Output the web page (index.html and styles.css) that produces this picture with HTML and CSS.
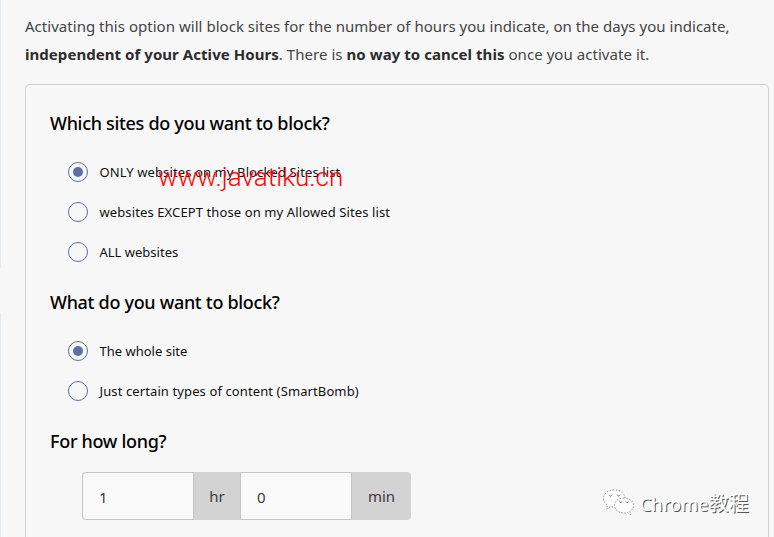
FILE: index.html
```
<!DOCTYPE html>
<html lang="en">
<head>
<meta charset="utf-8">
<title>Block sites</title>
<link rel="stylesheet" href="styles.css">
</head>
<body>
<div class="page">
  <div class="rail"><i class="rail-top"></i><i class="rail-bottom"></i></div>
  <main class="content">
    <p class="intro"><span class="line l1">Activating this option will block sites for the number of hours you indicate, on the days you indicate,</span>
    <span class="line l2"><b>independent of your Active Hours</b>. There is <b>no way to cancel this</b> once you activate it.</span></p>
    <section class="card">
      <h2>Which sites do you want to block?</h2>
      <div class="options">
        <label class="option"><i class="radio on"></i><span>ONLY websites on my Blocked Sites list</span></label>
        <label class="option"><i class="radio"></i><span>websites EXCEPT those on my Allowed Sites list</span></label>
        <label class="option"><i class="radio"></i><span class="plain">ALL websites</span></label>
      </div>
      <h2>What do you want to block?</h2>
      <div class="options">
        <label class="option"><i class="radio on"></i><span class="plain">The whole site</span></label>
        <label class="option"><i class="radio"></i><span>Just certain types of content (SmartBomb)</span></label>
      </div>
      <h2>For how long?</h2>
      <div class="duration">
        <span class="field first">1</span><span class="unit hr">hr</span><span class="field">0</span><span class="unit min">min</span>
      </div>
    </section>
  </main>
  <div class="url-mark">www.javatiku.cn</div>
  <div class="brand-mark">
    <svg width="32" height="28" viewBox="0 0 32 28">
      <g fill="#fff" stroke="#777" stroke-width=".8" stroke-dasharray="1.500 1.500">
        <path d="M12 2C6 2 1.500 5.500 1.500 10.500c0 3 1.500 5 4 6.500l-1 4 4-2.500c1.300.4 2.600.5 4 .5 6 0 10.500-3.500 10.500-8.500S18.500 2 12 2z"/>
        <path d="M22 10c-5.300 0-9.500 3.300-9.500 7.500S16.700 25 22 25c1.200 0 2.300-.2 3.300-.5l3.400 2-.9-3.200c2.300-1.400 3.700-3.300 3.700-5.800 0-4.200-4.200-7.500-9.500-7.500z"/>
      </g>
      <g fill="#fff" stroke="#666" stroke-width=".8"><path d="M7 6.500l1.500 2L10 6.500M15 6.500l1.500 2L18 6.500M17.500 13.500l1.200 1.500 1.200-1.500M24 13.500l1.200 1.500 1.200-1.500"/></g>
    </svg>
    <span class="brand-text">Chrome<span class="cjk">教程</span></span>
  </div>
</div>
</body>
</html>
```
FILE: styles.css
```
* { box-sizing: border-box; }
body { margin: 0; background: #f7f7f7; font-family: "Noto Sans", "Open Sans", sans-serif; color: #333; }
.page { position: relative; display: flex; width: 774px; height: 537px; overflow: hidden; }
.rail { width: 1px; display: flex; flex-direction: column; justify-content: space-between; }
.rail i { background: #e5eaf0; }
.rail-top { height: 268px; }
.rail-bottom { height: 224px; }
.content { flex: 1; padding: 12px 5px 0 24px; }
.intro { margin: 0; font-size: 15px; line-height: 28px; height: 72px; font-weight: 400; color: #444; }
.line { display: block; height: 28px; white-space: nowrap; }
.l1 { letter-spacing: .03px; }
.l2 { letter-spacing: .05px; }
.intro b { font-weight: 700; color: #2c2c2c; }
.card { height: 600px; border: 1px solid #d0d0d0; border-radius: 5px; padding: 23px 24px; }
h2 { margin: 0; font: 500 18px/30px "Noto Sans", sans-serif; letter-spacing: -.31px; color: #000; white-space: nowrap; }
.options { padding: 14px 0 15px 18px; }
.option { display: flex; align-items: center; gap: 11.500px; height: 40px; font-size: 13px; letter-spacing: .11px; color: #111; white-space: nowrap; }
.plain { letter-spacing: 0; }
.radio { width: 20px; height: 20px; border: 1px solid #5c70a3; border-radius: 50%; display: flex; align-items: center; justify-content: center; }
.radio.on::after { content: ""; width: 10px; height: 10px; border-radius: 50%; background: #5c70a3; }
.duration { display: flex; margin: 16px 0 0 32px; width: 329px; height: 48px; font-size: 15px; line-height: 48px; border-radius: 4px; overflow: hidden; background: #d3d3d3; color: #3c3c3c; }
.field { width: 112px; border: 1px solid #c4c4c4; background: #f9f9f9; padding-left: 16px; }
.field.first { border-radius: 4px 0 0 4px; }
.unit { text-align: center; }
.hr { width: 46px; }
.min { width: 59px; }
.url-mark { position: absolute; left: 158px; top: 161px; font: 300 26px/32px Roboto, sans-serif; letter-spacing: .05px; color: #f00; white-space: nowrap; }
.brand-mark { position: absolute; left: 602px; top: 488px; display: flex; gap: 6px; }
.brand-text { font: 400 18px/30px "Noto Sans", sans-serif; letter-spacing: .2px; color: #fff; text-shadow: 1px 1px 0 #555; white-space: nowrap; }
.cjk { font-family: "Noto Sans CJK SC", sans-serif; font-size: 20px; letter-spacing: 0; }
```
